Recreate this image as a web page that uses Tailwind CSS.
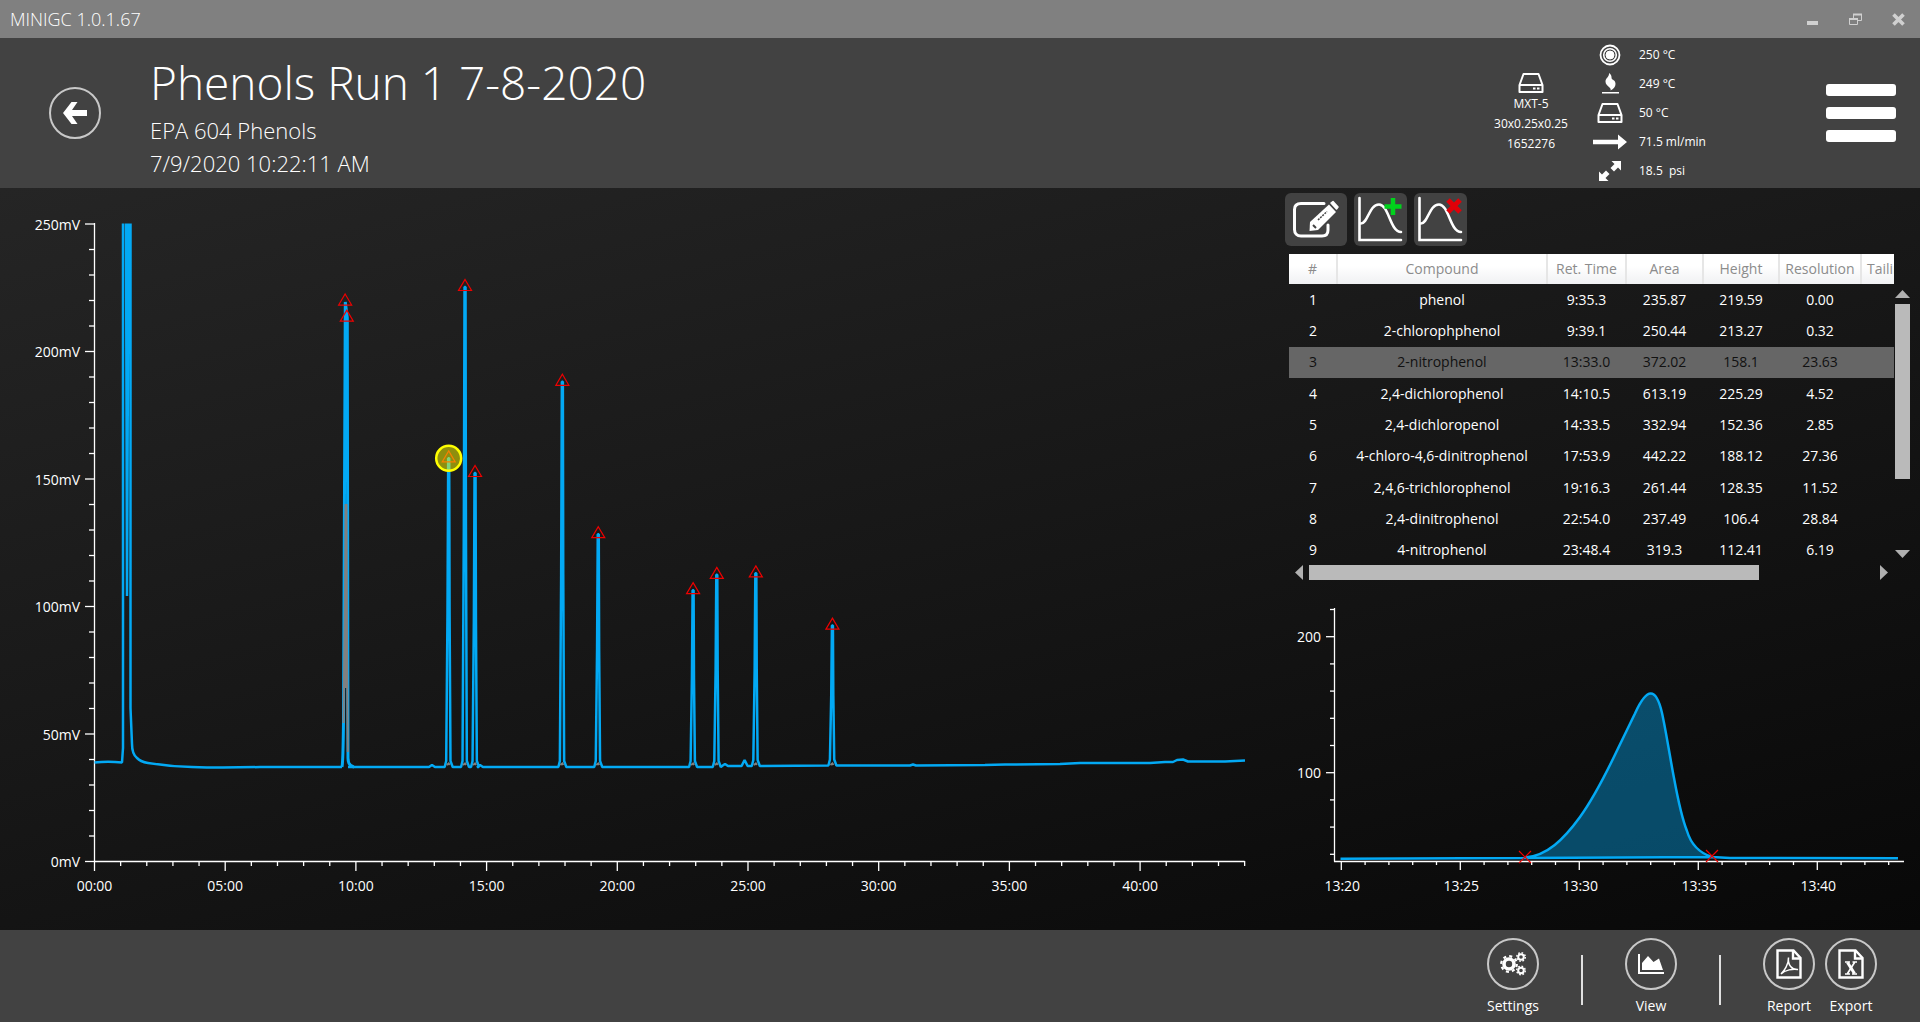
<!DOCTYPE html>
<html lang="en">
  <head>
    <meta charset="UTF-8" />
    <meta name="viewport" content="width=device-width, initial-scale=1.0" />
    <script src="https://cdn.jsdelivr.net/npm/@tailwindcss/browser@4"></script>
    <title>MINIGC 1.0.1.67</title>
  </head>
  <body class="flex flex-col h-screen overflow-hidden bg-[#141414] text-white font-['Open_Sans','Noto_Sans',sans-serif]">
    <!-- Title bar -->
    <div class="flex items-center justify-between h-[38px] shrink-0 bg-[#808080] pl-[10px] pr-[15px]">
      <span class="text-lg font-light">MINIGC 1.0.1.67</span>
      <div class="flex items-center gap-[30px]">
        <button aria-label="Minimize">
          <svg class="w-[13px] h-[13px]" viewBox="0 0 13 13"><path d="M1 8h11v4H1z" fill="#d0d0d0" /></svg>
        </button>
        <button aria-label="Restore">
          <svg class="w-[13px] h-[13px]" viewBox="0 0 13 13" fill="none" stroke="#d0d0d0">
            <path d="M4.5 5V1.5h8v6H9" /><path d="M4 1.5h9M0 6h9" stroke-width="2" /><path d="M.5 5.5h8v6h-8z" />
          </svg>
        </button>
        <button aria-label="Close">
          <svg class="w-[13px] h-[13px]" viewBox="0 0 13 13"><path d="M1.5 1.5l10 10M11.500 1.5l-10 10" stroke="#d0d0d0" stroke-width="3.600" /></svg>
        </button>
      </div>
    </div>

    <!-- Run header -->
    <header class="flex h-[150px] shrink-0 bg-[#424242] pl-[49px] pr-6">
      <button aria-label="Back" class="self-center w-[52px] h-[52px] rounded-full border-2 border-[#c8c8c8] flex items-center justify-center">
        <svg class="w-6 h-6" viewBox="0 0 24 24"><path d="M0 12L8.500 1h6L9 9h15v6H9l5.500 8h-6z" fill="#fff" /></svg>
      </button>
      <div class="ml-[49px] pt-[12px] grow font-light">
        <h1 class="text-[46px] leading-[64px]">Phenols Run 1 7-8-2020</h1>
        <p class="text-[22px] leading-[33px]">EPA 604 Phenols</p>
        <p class="text-[22px] leading-[33px]">7/9/2020 10:22:11 AM</p>
      </div>
      <div class="w-[92px] pt-[34px] flex flex-col items-center text-xs leading-5 text-center">
        <svg class="w-[26px] h-[22px]" viewBox="0 0 26 22" fill="none" stroke="#fff" stroke-width="2">
          <path d="M5.500 2h15L24.500 13v7h-23v-7zM1.500 13h23" stroke-linejoin="round" />
          <path d="M15 16.500h2.500M19 16.500h2.500" />
        </svg>
        <span>MXT-5</span>
        <span>30x0.25x0.25</span>
        <span>1652276</span>
      </div>
      <ul class="ml-[13px] mr-[107px] w-[129px] pt-[2px] text-xs">
        <li class="flex items-center h-[29px]">
          <span class="w-10 mr-[9px] flex justify-center">
            <svg class="w-[22px] h-[22px]" viewBox="0 0 22 22" fill="none" stroke="#fff">
              <circle cx="11" cy="11" r="9.500" stroke-width="1.800" /><circle cx="11" cy="11" r="6.300" stroke-width="1.600" /><circle cx="11" cy="11" r="4" fill="#fff" />
            </svg>
          </span>250 °C
        </li>
        <li class="flex items-center h-[29px]">
          <span class="w-10 mr-[9px] flex justify-center">
            <svg class="w-[22px] h-[22px]" viewBox="0 0 22 22" fill="#fff">
              <path d="M10 0c4 3 1.500 5 3.500 6.500C15 7.500 16.500 8 16.500 11c0 3-2 5-5 6.500.5-1.500 0-2-1.500-3.500-2-2-3.500-3-3.500-5.500C6.500 5 10.500 4 10 0zM3 19h17v1.600H3z" />
            </svg>
          </span>249 °C
        </li>
        <li class="flex items-center h-[29px]">
          <span class="w-10 mr-[9px] flex justify-center">
            <svg class="w-[26px] h-[22px]" viewBox="0 0 26 22" fill="none" stroke="#fff" stroke-width="2">
              <path d="M5.500 2h15L24.500 13v7h-23v-7zM1.500 13h23" stroke-linejoin="round" />
              <path d="M15 16.500h2.500M19 16.500h2.500" />
            </svg>
          </span>50 °C
        </li>
        <li class="flex items-center h-[29px]">
          <span class="w-10 mr-[9px] flex justify-center">
            <svg class="w-[34px] h-4" viewBox="0 0 34 16" fill="#fff"><path d="M0 5.800h25V.5L34 8l-9 7.500v-5.300H0z" /></svg>
          </span>71.5 ml/min
        </li>
        <li class="flex items-center h-[29px]">
          <span class="w-10 mr-[9px] flex justify-center">
            <svg class="w-[22px] h-[22px]" viewBox="0 0 22 22" fill="#fff">
              <path d="M12.500 1H22v9.500l-3-3-4 4-3.500-3.500 4-4zM9.500 21H0v-9.500l3 3 4-4L10.500 14l-4 4z" />
            </svg>
          </span><span class="whitespace-pre">18.5  psi</span>
        </li>
      </ul>
      <button aria-label="Menu" class="self-center w-[70px] flex flex-col gap-[11px]">
        <span class="w-full h-3 rounded-[3px] bg-white"></span>
        <span class="w-full h-3 rounded-[3px] bg-white"></span>
        <span class="w-full h-3 rounded-[3px] bg-white"></span>
      </button>
    </header>

    <main class="flex grow min-h-0 bg-[linear-gradient(165deg,#252525,#080808)]">
      <!-- Chromatogram -->
      <svg id="runChart" class="w-2/3 h-full" viewBox="0 0 1280 742" role="img" aria-label="Chromatogram"></svg>

      <div class="w-1/3 flex flex-col pl-[5px] pt-[5px]">
        <div class="flex gap-[7px]">
          <button aria-label="Edit peaks" class="w-[62px] h-[53px] rounded-md bg-[#424242]">
            <svg class="w-full h-full" viewBox="0 0 62 53" fill="none" stroke="#fff">
              <path d="M39 10.500H16c-4 0-6.500 2-6.500 6v20c0 4 2.500 6.500 6.500 6.500h21c4 0 6-2 6-6v-5" stroke-width="3" stroke-linecap="round" />
              <path d="M25 29L44 11.500l7 7.500L33 37l-8.500 1z" fill="#fff" stroke="none" />
              <path d="M46 10l2-1.500 5 5.500-1.500 2z" fill="#fff" stroke-width="1.500" stroke-linejoin="round" />
              <path d="M33 27l9-8.500" stroke="#424242" stroke-width="1.500" stroke-dasharray="2 1" /><path d="M28 32l3 3" stroke="#424242" stroke-width="2" />
            </svg>
          </button>
          <button aria-label="Add peak" class="w-[53px] h-[53px] rounded-md bg-[#424242]">
            <svg class="w-full h-full" viewBox="0 0 53 53" fill="none" stroke="#fff" stroke-width="2.600" stroke-linecap="round">
              <path d="M5.500 5v42H47" /><path d="M7 30.500c7 0 8-19 18-19S36 39 47 39" />
              <path d="M39 5v17M30.500 13.500h17" stroke="#00d21c" stroke-width="4.500" stroke-linecap="butt" />
            </svg>
          </button>
          <button aria-label="Remove peak" class="w-[53px] h-[53px] rounded-md bg-[#424242]">
            <svg class="w-full h-full" viewBox="0 0 53 53" fill="none" stroke="#fff" stroke-width="2.600" stroke-linecap="round">
              <path d="M5.500 5v42H47" /><path d="M7 30.500c7 0 8-19 18-19S36 39 47 39" />
              <path d="M34 7l12 12M46 7L34 19" stroke="#e00008" stroke-width="5" stroke-linecap="butt" />
            </svg>
          </button>
        </div>

        <!-- Compound table and its scroll bars -->
        <div class="mt-2 ml-1 mr-[9px] flex">
          <div class="grow w-0 h-[311px] overflow-hidden">
            <table class="table-fixed w-[654px] h-[312px] text-sm text-center">
              <thead>
                <tr class="h-[30px] bg-linear-to-b from-white from-40% to-[#f0f1f3] text-[#8c8c8c]">
                  <th class="w-12 font-normal border-r-2 border-[#e6e6e6]">#</th>
                  <th class="w-[210px] font-normal border-r-2 border-[#e6e6e6]">Compound</th>
                  <th class="w-[79px] font-normal border-r-2 border-[#e6e6e6]">Ret. Time</th>
                  <th class="w-[77px] font-normal border-r-2 border-[#e6e6e6]">Area</th>
                  <th class="w-[76px] font-normal border-r-2 border-[#e6e6e6]">Height</th>
                  <th class="w-[82px] font-normal border-r-2 border-[#e6e6e6]">Resolution</th>
                  <th class="w-[82px] font-normal text-left pl-[5px]">Tailing</th>
                </tr>
              </thead>
              <tbody id="peakRows"></tbody>
            </table>
          </div>
          <div class="w-[17px] pt-9 pb-[7px] flex flex-col items-center" aria-hidden="true">
            <svg class="w-[15px] h-2" viewBox="0 0 15 8"><path d="M0 8L7.500 0 15 8z" fill="#b0b0b0" /></svg>
            <div class="mt-[6px] w-[15px] h-[175px] bg-[#bababa]"></div>
            <svg class="mt-auto w-[15px] h-2" viewBox="0 0 15 8"><path d="M0 0h15L7.500 8z" fill="#b0b0b0" /></svg>
          </div>
        </div>
        <div class="ml-[10px] mr-8 flex items-center" aria-hidden="true">
          <svg class="w-2 h-[15px]" viewBox="0 0 8 15"><path d="M8 0v15L0 7.500z" fill="#b0b0b0" /></svg>
          <div class="ml-[6px] grow mr-[121px] h-[15px] bg-[#bababa]"></div>
          <svg class="w-2 h-[15px]" viewBox="0 0 8 15"><path d="M0 0v15l8-7.500z" fill="#b0b0b0" /></svg>
        </div>

        <!-- Selected peak -->
        <svg id="peakChart" class="w-full grow min-h-0" viewBox="0 0 635 350" role="img" aria-label="Selected peak"></svg>
      </div>
    </main>

    <footer class="flex items-center justify-end gap-[42px] h-[92px] shrink-0 bg-[#424242] pr-[43px] pt-[2px] text-sm">
      <button class="w-[52px] flex flex-col items-center gap-[6px]">
        <span class="w-[52px] h-[52px] rounded-full border-2 border-[#c8c8c8] flex items-center justify-center">
          <svg class="w-[26px] h-6" viewBox="0 0 26 24" fill="none" stroke="#fff">
            <circle cx="9" cy="12" r="5" stroke-width="3.600" /><circle cx="9" cy="12" r="7.800" stroke-width="2.200" stroke-dasharray="3.060 3.060" />
            <circle cx="21" cy="5" r="2.800" stroke-width="2" /><circle cx="21" cy="5" r="4.300" stroke-width="1.400" stroke-dasharray="1.690 1.690" />
            <circle cx="21" cy="18.500" r="2.800" stroke-width="2" /><circle cx="21" cy="18.500" r="4.300" stroke-width="1.400" stroke-dasharray="1.690 1.690" />
          </svg>
        </span>
        Settings
      </button>
      <div class="w-[2px] h-[50px] mt-[6px] bg-[#e0e0e0]"></div>
      <button class="w-[52px] flex flex-col items-center gap-[6px]">
        <span class="w-[52px] h-[52px] rounded-full border-2 border-[#c8c8c8] flex items-center justify-center">
          <svg class="w-[26px] h-5" viewBox="0 0 26 20" fill="#fff"><path d="M0 0h2v18h24v2H0z" /><path d="M4 16V9l6-7 5.500 6L21 4.500 25 16z" /></svg>
        </span>
        View
      </button>
      <div class="w-[2px] h-[50px] mt-[6px] bg-[#e0e0e0]"></div>
      <div class="flex gap-[10px]">
        <button class="w-[52px] flex flex-col items-center gap-[6px]">
          <span class="w-[52px] h-[52px] rounded-full border-2 border-[#c8c8c8] flex items-center justify-center">
            <svg class="w-[26px] h-[30px]" viewBox="0 0 26 30" fill="none" stroke="#fff" stroke-width="2.400">
              <path d="M1.500 1.500h16L24.500 9v19.500h-23z" /><path d="M17 1.500V9.500h7.500" />
              <path d="M5 25c3-3 8-10 7.500-16.500C11.500 16 16 21 22 20.500 17 19.500 9 21 5 25z" stroke-width="1.500" />
            </svg>
          </span>
          Report
        </button>
        <button class="w-[52px] flex flex-col items-center gap-[6px]">
          <span class="w-[52px] h-[52px] rounded-full border-2 border-[#c8c8c8] flex items-center justify-center">
            <svg class="w-[26px] h-[30px]" viewBox="0 0 26 30" fill="none" stroke="#fff" stroke-width="2.400">
              <path d="M1.500 1.500h16L24.500 9v19.500h-23z" /><path d="M17 1.500V9.500h7.500" />
              <path d="M9.500 13.500l7 11" stroke-width="3" /><path d="M16.500 13.500l-7 11M7 13h5M14.500 13H19M7 25h5M14 25h5" stroke-width="1.700" />
            </svg>
          </span>
          Export
        </button>
      </div>
    </footer>

    <script>
      const rows = [
        ["1", "phenol", "9:35.3", "235.87", "219.59", "0.00"],
        ["2", "2-chlorophphenol", "9:39.1", "250.44", "213.27", "0.32"],
        ["3", "2-nitrophenol", "13:33.0", "372.02", "158.1", "23.63"],
        ["4", "2,4-dichlorophenol", "14:10.5", "613.19", "225.29", "4.52"],
        ["5", "2,4-dichloropenol", "14:33.5", "332.94", "152.36", "2.85"],
        ["6", "4-chloro-4,6-dinitrophenol", "17:53.9", "442.22", "188.12", "27.36"],
        ["7", "2,4,6-trichlorophenol", "19:16.3", "261.44", "128.35", "11.52"],
        ["8", "2,4-dinitrophenol", "22:54.0", "237.49", "106.4", "28.84"],
        ["9", "4-nitrophenol", "23:48.4", "319.3", "112.41", "6.19"],
      ]
      const selected = "3"

      document.getElementById("peakRows").innerHTML = rows
        .map((row) => {
          const style = row[0] === selected ? "bg-[#666666] text-[#111111]" : ""
          return `<tr class="${style}">${row.map((cell) => `<td>${cell}</td>`).join("")}<td></td></tr>`
        })
        .join("")

      const line = (x1, y1, x2, y2) => `<path d="M${x1} ${y1}L${x2} ${y2}" stroke="#fff" stroke-width="1.3"/>`
      const label = (x, y, anchor, text) => `<text x="${x}" y="${y}" text-anchor="${anchor}" fill="#fff" font-size="14">${text}</text>`

      function drawRun() {
        const X = (min) => 94.5 + 26.14 * min
        const Y = (mv) => 673.5 - 2.55 * mv
        let svg = line(94.5, 35, 94.5, 674) + line(94, 673.5, X(44), 673.5)
        for (let mv = 0; mv <= 250; mv += 10) {
          const major = mv % 50 === 0
          svg += line(major ? 85 : 89, Y(mv), 94.5, Y(mv))
          if (major) svg += label(80, Y(mv) + 6, "end", mv + "mV")
        }
        for (let min = 0; min <= 44; min++) {
          const major = min % 5 === 0
          svg += line(X(min), 673, X(min), major ? 683 : 678)
          if (major) svg += label(X(min), 703, "middle", String(min).padStart(2, "0") + ":00")
        }

        const peaks = rows.map((row) => {
          const [m, s] = row[2].split(":")
          return [Number(m) + s / 60, Number(row[4])]
        })
        peaks.push([25.3, 113], [28.23, 92.5])

        // solvent front, clipped at the top of the scale
        svg += `<g fill="none" stroke="#03a9f4" stroke-width="2.5" stroke-linejoin="bevel">
          <path d="M94.5 574.5Q108 573 122 574.500L123 560V35.5M126 35.5L127 408 128.500 35.5M130.500 35.5V520L132 556Q132 566 137 570Q141 574 148 575Q170 578.500 192 579Q220 580 260 579H342"/>`
        const base = 579
        let d = `M348 579`
        const bumps = [[432, 577], [480, 577], [725, 576], [744.6, 572], [913, 576.5]]
        const stops = peaks.slice(2).map(([t, mv]) => [X(t), Y(mv), true]).concat(bumps).sort((a, b) => a[0] - b[0])
        stops.forEach(([x, y, peak]) => {
          const b = x < 720 ? base : x < 800 ? base - 1 : base - 1.5
          const mid = (y + b) / 2
          d += peak
            ? `L${x - 4} ${b}L${x - 2.5} ${b - 6}L${x - 1.2} ${mid}L${x - 0.5} ${y}L${x + 0.5} ${y}L${x + 0.9} ${mid}L${x + 1.8} ${b - 6}L${x + 4} ${b}`
            : `L${x - 3} ${b}L${x} ${y}L${x + 3} ${b}`
        })
        d += `L985 577L1005 576.5L1060 576L1080 575L1150 575L1165 574L1173 574L1177 572L1183 571.500L1188 573.500L1200 573.500L1225 573.500L1245 572.500`
        svg += `<path d="${d}"/>`
        svg += `<path d="M342 579Q343 575 343.500 534L345.300 114L347.300 130L348 570Q348 578 354 579" stroke-width="3"/></g>`
        svg += `<path d="M343.500 535L346 316L347.800 564" fill="none" stroke="#808080" stroke-width="2"/><path d="M346 316V500" stroke="#808080" stroke-width="3"/>`

        peaks.forEach(([t, mv], i) => {
          const x = X(t)
          const y = Y(mv)
          if (i > 1) svg += `<path d="M${x - 2} 577L${x} 575.500L${x + 1} 577" fill="none" stroke="#808080" stroke-width="2"/>`
          svg += `<path d="M${x} ${y - 7.5}L${x + 6.5} ${y + 3.5}H${x - 6.5}Z" fill="none" stroke="#f00000" stroke-width="1.2"/>`
        })
        const [t, mv] = peaks[selected - 1]
        svg += `<circle cx="${X(t)}" cy="${Y(mv)}" r="12.500" fill="#ffff00" fill-opacity=".5" stroke="#ffff00" stroke-width="2.500"/>`
        document.getElementById("runChart").innerHTML = svg
      }

      function drawPeak() {
        const X = (sec) => 56.3 + 23.8 * sec
        const Y = (mv) => 328.7 - 1.36 * mv
        let svg = line(49.5, 28, 49.5, 281.5) + line(49, 281.5, 619, 281.5)
        for (let mv = 40; mv <= 220; mv += 20) {
          const major = mv % 100 === 0
          svg += line(major ? 41 : 45, Y(mv), 49.5, Y(mv))
          if (major) svg += label(36, Y(mv) + 5, "end", mv)
        }
        for (let sec = 0; sec <= 23; sec++) {
          const major = sec % 5 === 0
          svg += line(X(sec), 281, X(sec), major ? 290 : 285)
          if (major) svg += label(X(sec) + 1, 311, "middle", "13:" + (20 + sec))
        }
        const curve = "M240 277.500C262 276 279 259 295 237C305 223 320 196 333 168.500L350 133.500C362 107 371 107 377 133C381 151 386 183 389 198Q396 236 402 251Q408 271 427 277"
        svg += `<path d="${curve}Z" fill="#03a9f4" fill-opacity=".4"/>
          <path d="${curve}M55.500 278.700L240 278L427 277L445 278L613 278.300" fill="none" stroke="#03a9f4" stroke-width="2.500"/>
          <path d="M234 271l12 12M246 271l-12 12M421 270l12 12M433 270l-12 12" stroke="#f00000" stroke-width="1.200"/>`
        document.getElementById("peakChart").innerHTML = svg
      }

      drawRun()
      drawPeak()
    </script>
  </body>
</html>
